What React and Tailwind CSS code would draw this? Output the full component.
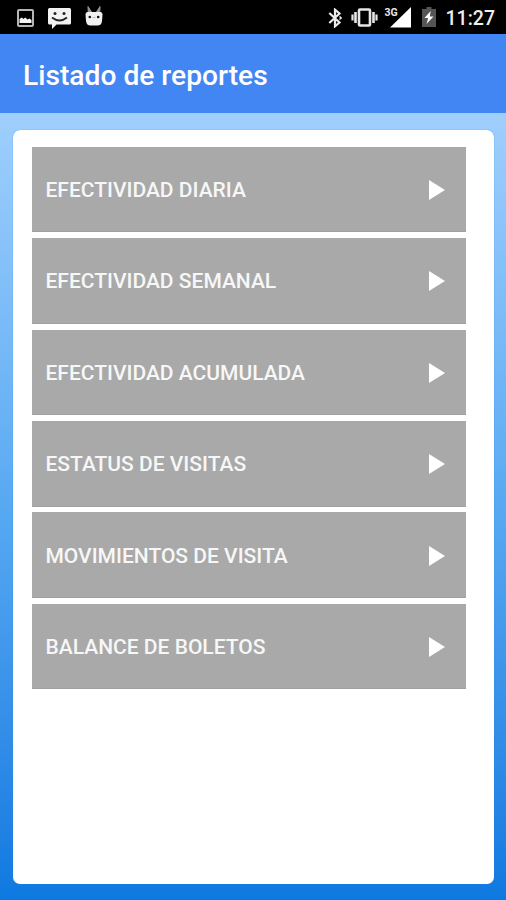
const REPORTS = [
  'EFECTIVIDAD DIARIA',
  'EFECTIVIDAD SEMANAL',
  'EFECTIVIDAD ACUMULADA',
  'ESTATUS DE VISITAS',
  'MOVIMIENTOS DE VISITA',
  'BALANCE DE BOLETOS',
];

export default function App() {
  return (
    <div className="flex flex-col w-full h-screen overflow-hidden font-['Roboto',sans-serif] bg-black">
      <StatusBar />

      <header className="flex items-center h-[79px] shrink-0 pl-[23px] pt-[5px] bg-[#4286f4]">
        <h1 className="text-[28.2px] leading-8 font-medium text-white whitespace-nowrap">Listado de reportes</h1>
      </header>

      <main className="flex-1 min-h-0 pl-[13px] pr-3 pt-[16.5px] pb-4 bg-linear-to-b from-[#9fcffd] via-[#57a9f2] to-[#0d79e0]">
        <div className="h-full rounded-[7px] bg-white pl-[18.5px] pr-7 pt-[17.3px] shadow-[0_0_1px_#1683e6]">
          <ul className="flex flex-col gap-[5.8px]">
            {REPORTS.map(label => (
              <ReportRow key={label} label={label} />
            ))}
          </ul>
        </div>
      </main>
    </div>
  );
}

/* ── Sub-components ── */
function ReportRow({ label }) {
  return (
    <li className="flex items-center justify-between h-[85.6px] pl-3.5 pr-[21px] pt-0.5 bg-[#a9a9a9] border-b border-[#a0a0a0]">
      <span className="text-[21px] leading-6 font-medium text-[#f7f7f7] whitespace-nowrap">{label}</span>
      <svg className="w-4 h-5" viewBox="0 0 16 20" fill="#fff">
        <path d="M0 0 16 10 0 20z" />
      </svg>
    </li>
  );
}

function StatusBar() {
  return (
    <div className="flex items-start justify-between h-[34px] shrink-0 pl-[17px] pr-[11px] bg-black">
      <div className="flex items-start">
        {/* Picture */}
        <svg className="w-[17px] h-[18px] mt-[9px]" viewBox="0 0 17 18">
          <rect x="1" y="1" width="15" height="16" rx="1" fill="none" stroke="#b5b5b5" strokeWidth="2" />
          <path d="M2.500 14v-4l2.300-1.500 1.600 1.500 1.800-1.500 2.400 2 1.800-.9 2.100 1.400v3z" fill="#f4f4f4" />
        </svg>
        {/* Message */}
        <svg className="w-[23px] h-[21px] mt-2 ml-3.5" viewBox="0 0 23 21">
          <path d="M1.5 0h20Q23 0 23 1.5v13.500q0 1.500-1.500 1.500H8.500L4 21v-4.500H1.500Q0 16.500 0 15V1.500Q0 0 1.500 0z" fill="#f2f2f2" />
          <circle cx="7" cy="5.500" r="1.500" fill="#222" />
          <circle cx="16" cy="5.500" r="1.500" fill="#222" />
          <path d="M4 9.500Q11.500 15.500 19 9.500" fill="none" stroke="#222" strokeWidth="1.800" />
        </svg>
        {/* Debug mascot */}
        <svg className="w-[18px] h-5 mt-1.5 ml-3.5" viewBox="0 0 18 20">
          <path d="M3 .5 3.300 7 6.500 6zM15 .5 14.700 7 11.500 6z" fill="#999" stroke="#999" strokeWidth="1" />
          <path d="M2.500 6h13q2 0 2 2.500L17 15q-.5 4.500-4.500 4.500h-7Q1.500 19.500 1 15L.5 8.500Q.5 6 2.500 6z" fill="#f1f1f1" />
          <circle cx="4.800" cy="11" r="1.300" fill="#111" />
          <circle cx="13.200" cy="11" r="1.300" fill="#111" />
          <path d="M7.500 11.500h3" stroke="#bbb" strokeWidth="1" />
        </svg>
      </div>

      <div className="flex items-start">
        {/* Bluetooth */}
        <svg className="w-[14px] h-5 mt-2" viewBox="0 0 14 20" fill="none" stroke="#ececec" strokeWidth="2.200">
          <path d="M1.300 5 11.500 14.500 7 18.300V1.700l4.500 3.800L1.300 15" />
          <path d="M11.500 8.500 13.200 10l-1.700 1.500" strokeWidth="1.500" />
        </svg>
        {/* Vibrate */}
        <svg className="w-[27px] h-[19px] mt-2 ml-[9px]" viewBox="0 0 27 19" fill="none" stroke="#e6e6e6">
          <rect x="8" y="1.500" width="11" height="16" rx="1" strokeWidth="2.600" />
          <path d="M4.500 4v11M22.500 4v11" strokeWidth="2.600" />
          <path d="M1.500 6.500v6M25.500 6.500v6" strokeWidth="2.200" />
        </svg>
        {/* Signal */}
        <div className="relative w-[26px] h-7 ml-[7px]">
          <svg className="w-[26px] h-7" viewBox="0 0 26 28" fill="#fff">
            <path d="M26 7v20.500H5z" />
          </svg>
          <span className="absolute left-0 top-[7px] pr-px bg-black text-[10.5px] leading-[11px] font-bold text-[#e8e8e8]">3G</span>
        </div>
        {/* Battery */}
        <svg className="w-[14px] h-5 mt-[7px] ml-[11px]" viewBox="0 0 14 20">
          <path d="M4.500 0h5v2H14v18H0V2h4.500z" fill="#555" />
          <path d="M8.700 4 2.500 11h3.700L4.500 17l7-7.500H7.800z" fill="#fff" />
        </svg>
        <span className="mt-[7px] ml-2.5 text-[19.5px] leading-6 font-medium text-[#eee]">11:27</span>
      </div>
    </div>
  );
}
